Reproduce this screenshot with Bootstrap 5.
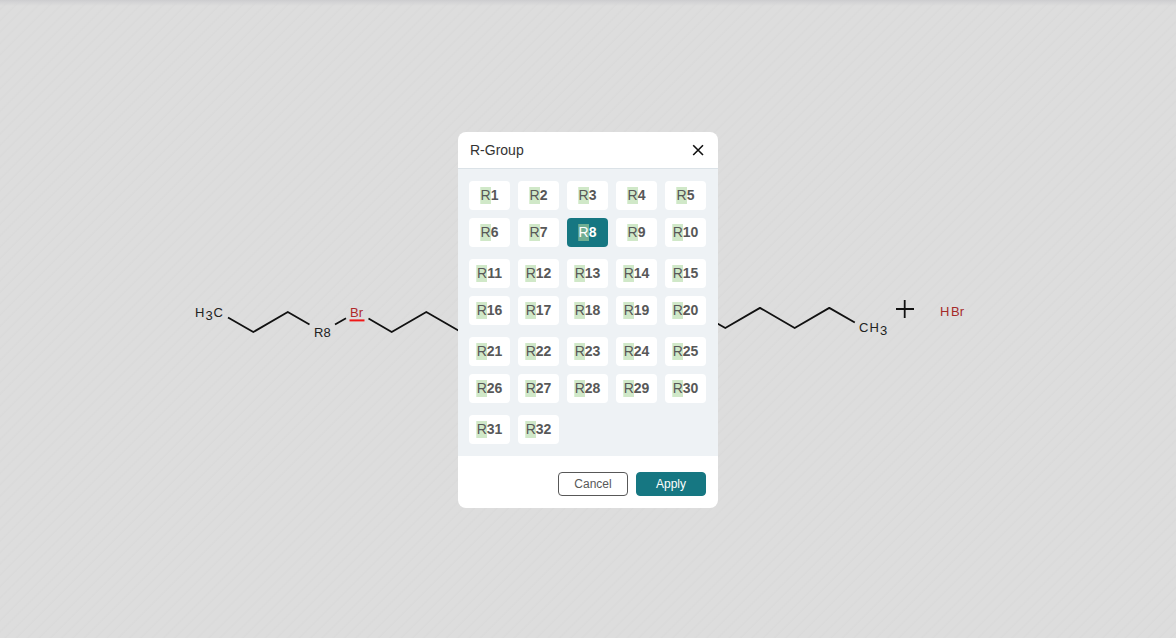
<!DOCTYPE html>
<html lang="en">
<head>
<meta charset="utf-8">
<meta name="viewport" content="width=device-width, initial-scale=1">
<title>R-Group</title>
<link href="https://cdn.jsdelivr.net/npm/bootstrap@5.3.0/dist/css/bootstrap.min.css" rel="stylesheet">
<style>
body { font-family: "Liberation Sans", Arial, sans-serif; color: #333; }
.stage {
  min-height: 100vh; padding-top: 2px;
  display: grid; grid-template-columns: minmax(0, 1fr); place-items: center;
  background:
    linear-gradient(#cdcdcf, #d3d3d5 2px, rgba(220,220,220,0) 6px),
    repeating-linear-gradient(135deg, #dddddd 0 5px, #dadada 7px, #dddddd 8px);
}
.stage > * { grid-area: 1 / 1; }
.molecule { width: 100%; max-width: 800px; font-size: 13px; }
.rg-dialog { width: 260px; border-radius: 8px; z-index: 1; overflow: hidden; }
.rg-head { height: 37px; padding: 0 12px; border-bottom: 1px solid #dbe2e7; }
.rg-head h1 { font-size: 14px; line-height: 20px; font-weight: 400; }
.rg-close { width: 16px; height: 16px; line-height: 0; color: #111; }
.rg-body { padding: 12px 12px 12px 11px; background: #eef2f5; gap: 12px; }
.rg-set { display: grid; grid-template-columns: repeat(5, 1fr); gap: 8px; }
.rg-item {
  height: 29px; padding: 0; border: 0; border-radius: 4px; background: #fff;
  color: #585858; font-size: 14px; line-height: 17px; font-weight: 700;
}
.rg-item span { display: inline-block; background: #d0e8c8; box-shadow: -1px 0 #dcefd6; font-weight: 400; }
.rg-item.active { background: #167782; color: #fff; }
.rg-item.active span { background: #70ae93; box-shadow: -1px 0 #5aa08e; }
.rg-foot { padding: 16px 12px 12px; gap: 8px; }
.rg-foot .btn { width: 70px; height: 24px; padding: 0; font-size: 12px; line-height: 22px; border-radius: 4px; }
.rg-cancel { color: #585858; border-color: #585858; background: #fff; }
.rg-apply { color: #fff; border-color: #167782; background: #167782; }
</style>
</head>
<body>
<main class="stage">
  <svg class="molecule" viewBox="188 290 800 60" role="img" aria-label="Reaction scheme" fill="#222">
    <g fill="none" stroke="#111" stroke-width="1.8" stroke-linejoin="round">
      <path d="M228 317.5 253.3 332 287.8 312 309.5 324.5M335 324.5 346 318.3M368.5 318.5 391.7 332 426.3 312 461 332"/>
      <path d="M690 308 725.3 328 760 307.9 794.7 328 829.3 307.9 854.8 322.5"/>
      <path d="M896 309H914M904.7 300V318"/>
      <path stroke="#f01818" stroke-width="2" d="M349.5 320.4H364.5"/>
    </g>
    <text y="317"><tspan x="195">H</tspan><tspan x="205.5" y="320">3</tspan><tspan x="213.5" y="317">C</tspan></text>
    <text x="314" y="337">R8</text>
    <text x="350" y="317" fill="#b02a2a">Br</text>
    <text y="332"><tspan x="859">C</tspan><tspan x="869.5">H</tspan><tspan x="880" y="335">3</tspan></text>
    <text y="316" fill="#a52a2a"><tspan x="940">H</tspan><tspan x="951">Br</tspan></text>
  </svg>

  <section class="rg-dialog bg-white" role="dialog" aria-labelledby="rg-title">
    <header class="rg-head d-flex align-items-center justify-content-between">
      <h1 id="rg-title" class="m-0">R-Group</h1>
      <button type="button" class="rg-close btn p-0 border-0" aria-label="Close">
        <svg width="16" height="16" viewBox="0 0 16 16" fill="none" stroke="currentColor" stroke-width="1.6"><path d="M3.2 3.2 13 13M13 3.2 3.2 13"/></svg>
      </button>
    </header>
    <div class="rg-body d-flex flex-column" id="rg-list"></div>
    <footer class="rg-foot d-flex justify-content-end">
      <button type="button" class="btn rg-cancel">Cancel</button>
      <button type="button" class="btn rg-apply">Apply</button>
    </footer>
  </section>
</main>
<script src="https://cdn.jsdelivr.net/npm/bootstrap@5.3.0/dist/js/bootstrap.bundle.min.js"></script>
<script>
const list = document.getElementById('rg-list');
for (let start = 1; start <= 32; start += 10) {
  const set = document.createElement('div');
  set.className = 'rg-set';
  for (let n = start; n < start + 10 && n <= 32; n++) {
    const item = document.createElement('button');
    item.type = 'button';
    item.className = 'rg-item' + (n === 8 ? ' active' : '');
    item.innerHTML = '<span>R</span>' + n;
    set.append(item);
  }
  list.append(set);
}
list.addEventListener('click', e => {
  const item = e.target.closest('.rg-item');
  if (!item) return;
  list.querySelector('.active')?.classList.remove('active');
  item.classList.add('active');
});
</script>
</body>
</html>
